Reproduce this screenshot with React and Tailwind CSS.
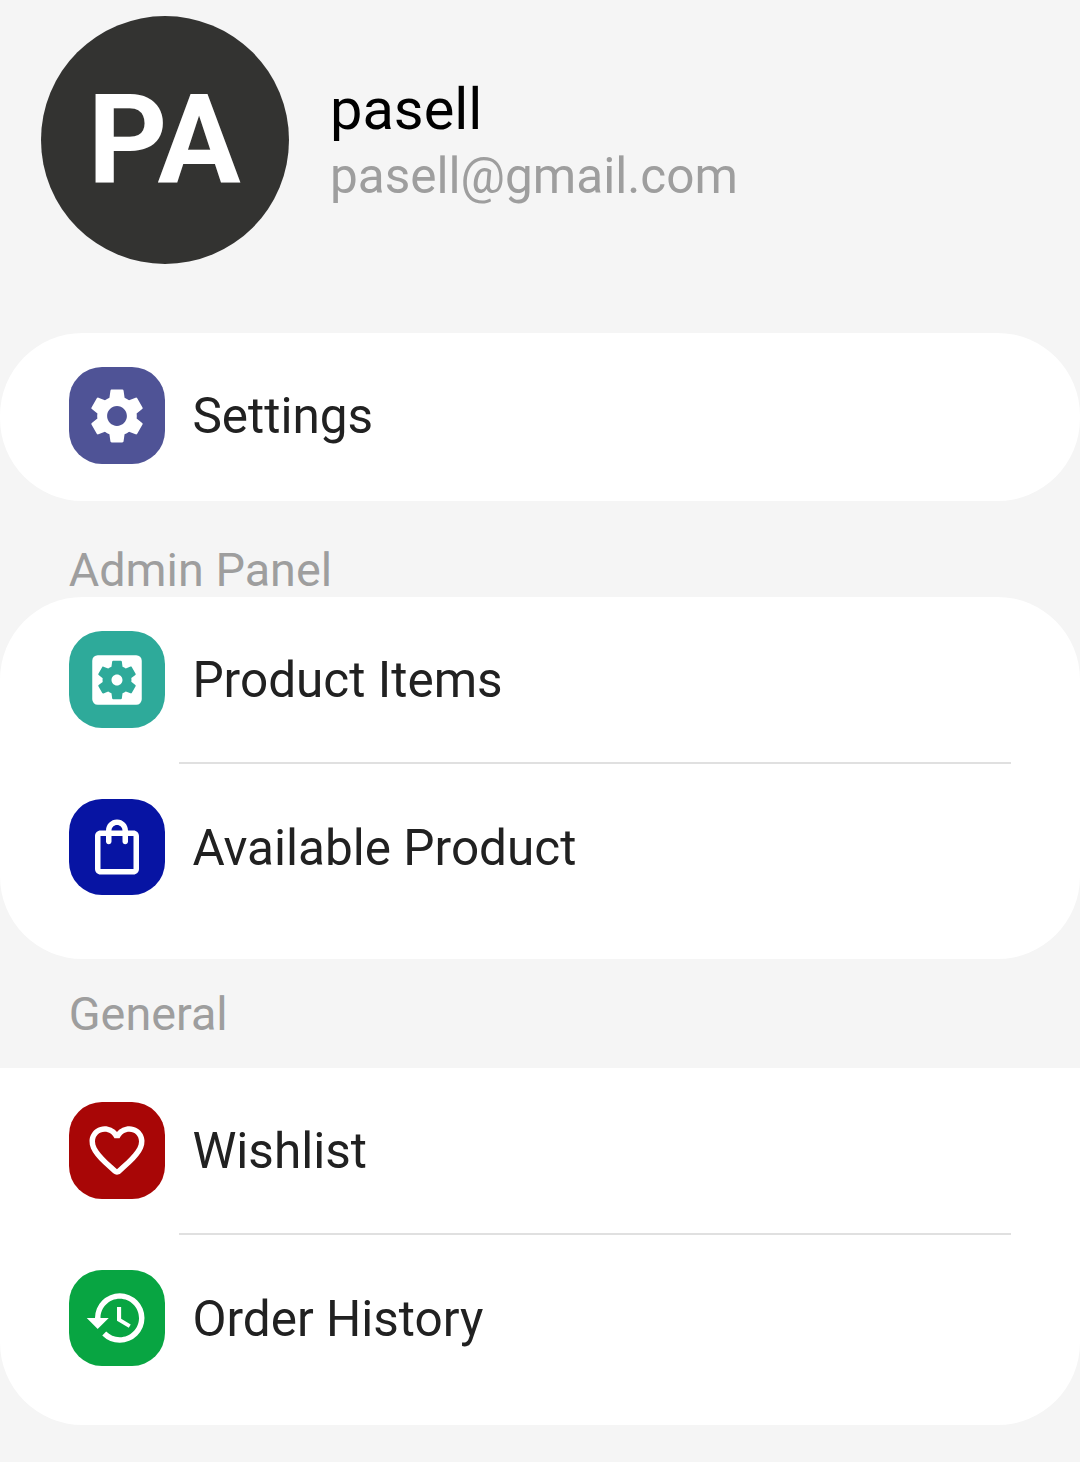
import { MdSettings, MdSettingsApplications, MdOutlineShoppingBag, MdHistory } from "react-icons/md";

function Heart({ className }) {
  return (
    <svg viewBox="0 0 24 24" fill="currentColor" className={className}>
      <path d="M19.66 3.99c-2.64-1.8-5.9-.96-7.66 1.1-1.76-2.06-5.02-2.91-7.66-1.1-1.4.96-2.28 2.58-2.34 4.29-.14 3.88 3.3 6.99 8.55 11.76l.1.09c.76.69 1.93.69 2.69-.01l.11-.1c5.25-4.76 8.68-7.87 8.55-11.75-.06-1.7-.94-3.32-2.34-4.28zM12.1 18.55l-.1.1-.1-.1C7.14 14.24 4 11.39 4 8.5 4 6.5 5.5 5 7.5 5c1.54 0 3.04.99 3.57 2.36h1.87C13.46 5.99 14.96 5 16.5 5c2 0 3.5 1.5 3.5 3.5 0 2.89-3.14 5.74-7.9 10.05z" />
    </svg>
  );
}

function Row({ icon: Icon, color, label }) {
  return (
    <div className="flex h-[165.5px] items-center gap-[27.4px] pl-[68.75px]">
      <div className={`flex size-[96.25px] items-center justify-center rounded-[33px] text-white ${color}`}>
        <Icon className="size-[66px]" />
      </div>
      <span className="pt-[3px] text-[49.5px] leading-none text-[#212121]">{label}</span>
    </div>
  );
}

function Divider() {
  return <div className="mr-[69px] ml-[179px] h-[2px] bg-[#e0e0e0]" />;
}

export default function App() {
  return (
    <main className="flex h-[1462px] w-[1080px] flex-col overflow-hidden bg-[#f5f5f5] font-['Roboto',sans-serif]">
      <header className="mt-[16px] flex h-[247.5px] items-center gap-[41.25px] pl-[41.25px]">
        <div className="flex size-[247.5px] items-center justify-center rounded-full bg-[#333331] pt-[1.5px] pr-[1.5px] text-[123.75px] leading-none font-bold text-white">
          PA
        </div>
        <div className="flex flex-col pt-[4px]">
          <h1 className="text-[57.75px] leading-[68px] text-black">pasell</h1>
          <p className="text-[49.5px] leading-[66px] text-[#9e9e9e]">pasell@gmail.com</p>
        </div>
      </header>

      <section className="mt-[69.3px] h-[167.9px] rounded-[82.5px] bg-white">
        <Row icon={MdSettings} color="bg-[#4f5396]" label="Settings" />
      </section>

      <h2 className="mt-[42px] h-[54.1px] pl-[68.75px] text-[46.75px] leading-[55px] text-[#9e9e9e]">Admin Panel</h2>
      <section className="h-[362.1px] rounded-[82.5px] bg-white">
        <Row icon={MdSettingsApplications} color="bg-[#2eaa9a]" label="Product Items" />
        <Divider />
        <Row icon={MdOutlineShoppingBag} color="bg-[#0714a3]" label="Available Product" />
      </section>

      <h2 className="mt-[28px] h-[80.9px] pl-[68.75px] text-[46.75px] leading-[55px] text-[#9e9e9e]">General</h2>
      <section className="h-[357.5px] rounded-b-[82.5px] bg-white">
        <Row icon={Heart} color="bg-[#a80606]" label="Wishlist" />
        <Divider />
        <Row icon={MdHistory} color="bg-[#08a542]" label="Order History" />
      </section>
    </main>
  );
}
